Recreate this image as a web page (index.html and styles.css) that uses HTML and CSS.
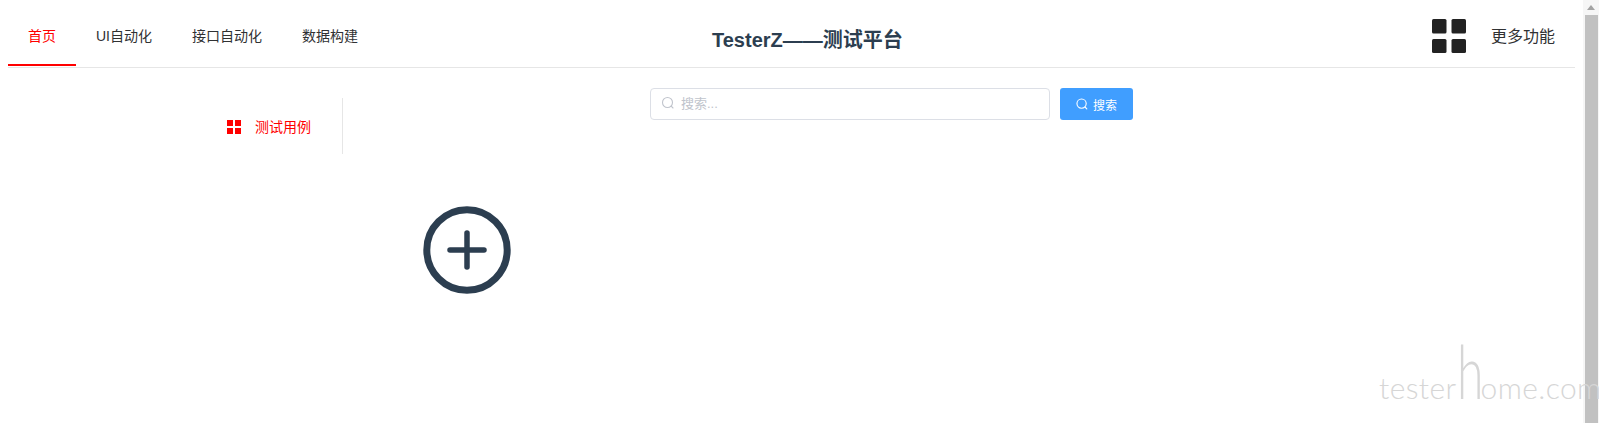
FILE: index.html
```html
<!DOCTYPE html>
<html>
<head>
  <title>TesterZ</title>
  <link rel="stylesheet" href="styles.css">
</head>
<body>
  <div class="page">
    <div class="header">
      <ul class="nav-menu">
        <li class="nav-item active">首页</li>
        <li class="nav-item">UI自动化</li>
        <li class="nav-item">接口自动化</li>
        <li class="nav-item">数据构建</li>
      </ul>
      <div class="title">TesterZ——测试平台</div>
      <div class="more">
        <svg class="more-icon" xmlns="http://www.w3.org/2000/svg" width="34" height="34" viewBox="0 0 34 34" fill="#222">
          <rect x="0" y="0" width="14.5" height="14.5" rx="1.5"></rect>
          <rect x="19.5" y="0" width="14.5" height="14.5" rx="1.5"></rect>
          <rect x="0" y="20" width="14.5" height="14" rx="1.5"></rect>
          <rect x="19.5" y="20" width="14.5" height="14" rx="1.5"></rect>
        </svg>
        <span class="more-text">更多功能</span>
      </div>
    </div>

    <div class="main">
      <div class="aside">
        <div class="aside-item">
          <svg xmlns="http://www.w3.org/2000/svg" width="14" height="14" viewBox="0 0 14 14" fill="#f00">
            <rect x="0" y="0" width="6" height="6"></rect>
            <rect x="8" y="0" width="6" height="6"></rect>
            <rect x="0" y="8" width="6" height="6"></rect>
            <rect x="8" y="8" width="6" height="6"></rect>
          </svg>
          <span>测试用例</span>
        </div>
      </div>
      <div class="content">
        <div class="search-row">
          <div class="search-box">
            <svg xmlns="http://www.w3.org/2000/svg" width="14" height="14" viewBox="0 0 14 14" fill="none" stroke="#c0c4cc" stroke-width="1.1" stroke-linecap="round">
              <circle cx="6.5" cy="6.5" r="5"></circle>
              <line x1="10.2" y1="10.2" x2="12" y2="12"></line>
            </svg>
            <input type="text" class="search-input" placeholder="搜索...">
          </div>
          <button class="search-btn">
            <svg xmlns="http://www.w3.org/2000/svg" width="12" height="12" viewBox="0 0 14 14" fill="none" stroke="#fff" stroke-width="1.3" stroke-linecap="round">
              <circle cx="6.5" cy="6.5" r="5.4"></circle>
              <line x1="10.5" y1="10.5" x2="12.6" y2="12.6"></line>
            </svg>
            搜索
          </button>
        </div>
        <svg class="add-icon" xmlns="http://www.w3.org/2000/svg" width="88" height="88" viewBox="0 0 88 88" fill="none" stroke="#2c3e50" stroke-linecap="round">
          <circle cx="44" cy="44" r="40.2" stroke-width="7"></circle>
          <line x1="27" y1="44" x2="61" y2="44" stroke-width="5.5"></line>
          <line x1="44" y1="27" x2="44" y2="61" stroke-width="5.5"></line>
        </svg>
      </div>
    </div>
  </div>

  <div class="scrollbar">
    <div class="scroll-arrow"></div>
    <div class="scroll-thumb"></div>
  </div>

  <div class="watermark">tester<span class="watermark-h">h</span>ome.com</div>
</body>
</html>
```

FILE: styles.css
```css
html, body {
  height: 100%;
}

body {
  display: flex;
  margin: 0;
  overflow: hidden;
  background-color: #fff;
  color: #2c3e50;
  font-family: "Liberation Sans", "Noto Sans CJK SC", sans-serif;
}

.page {
  flex: 1;
  min-width: 0;
  padding: 0 8px;
}

/* Top bar */
.header {
  display: flex;
  height: 67px;
  border-bottom: 1px solid #e6e6e6;
}

.nav-menu {
  display: flex;
  align-items: flex-end;
  margin: 0;
  padding: 0;
  list-style: none;
}

.nav-item {
  height: 58px;
  padding: 0 20px;
  margin-bottom: 1px;
  border-bottom: 2px solid transparent;
  color: #303133;
  font-size: 14px;
  line-height: 60px;
}

.nav-item.active {
  color: #f00;
  border-bottom-color: #f00;
}

.title {
  margin-left: 334px;
  padding-top: 27px;
  font-size: 20px;
  line-height: 26px;
  font-weight: 700;
  white-space: nowrap;
}

.more {
  display: flex;
  align-items: flex-start;
  margin-left: auto;
  padding: 19px 20px 0 0;
}

.more-text {
  margin-left: 25px;
  padding-top: 7px;
  color: #303133;
  font-size: 16px;
  line-height: 22px;
}

/* Main area */
.main {
  display: flex;
}

.aside {
  flex: none;
  width: 335px;
  padding-top: 30px;
}

.aside-item {
  display: flex;
  justify-content: flex-end;
  align-items: center;
  gap: 14px;
  height: 56px;
  padding-right: 31px;
  border-right: 1px solid #e6e6e6;
  box-sizing: border-box;
  color: #f00;
  font-size: 14px;
}

.aside-item svg {
  margin-top: 1px;
}

.content {
  flex: 1;
  padding-top: 20px;
}

.search-row {
  display: flex;
  gap: 10px;
  margin-left: 307px;
}

.search-box {
  display: flex;
  align-items: center;
  gap: 6px;
  width: 400px;
  height: 32px;
  padding: 0 12px 2px 10px;
  border: 1px solid #dcdfe6;
  border-radius: 4px;
  box-sizing: border-box;
}

.search-input {
  flex: 1;
  min-width: 0;
  padding: 0;
  border: none;
  outline: none;
  font-family: inherit;
  font-size: 13px;
}

.search-input::placeholder {
  color: #c0c4cc;
}

.search-btn {
  display: flex;
  align-items: center;
  justify-content: center;
  gap: 5px;
  width: 73px;
  height: 32px;
  padding: 0;
  border: none;
  border-radius: 3px;
  background-color: #409eff;
  color: #fff;
  font-family: inherit;
  font-size: 12px;
}

.add-icon {
  display: block;
  margin: 86px 0 0 80px;
}

/* Browser scrollbar */
.scrollbar {
  flex: none;
  display: flex;
  flex-direction: column;
  align-items: center;
  width: 16px;
  background-color: #f6f6f6;
}

.scroll-arrow {
  width: 0;
  height: 0;
  margin: 5px 0 5px;
  border-left: 4px solid transparent;
  border-right: 4px solid transparent;
  border-bottom: 5px solid #a3a3a3;
}

.scroll-thumb {
  flex: 1;
  width: 13px;
  background-color: #c1c1c1;
}

/* Site watermark over the screenshot */
.watermark {
  position: absolute;
  left: 1379px;
  top: 356px;
  color: #d6d6d6;
  font-family: "Lato", sans-serif;
  font-weight: 300;
  font-size: 30px;
  line-height: 62px;
  letter-spacing: 0.4px;
  white-space: nowrap;
}

.watermark-h {
  display: inline-block;
  width: 24px;
  font-size: 74px;
  line-height: 0;
  letter-spacing: 0;
  transform: scaleX(0.65);
  transform-origin: left bottom;
}
```
